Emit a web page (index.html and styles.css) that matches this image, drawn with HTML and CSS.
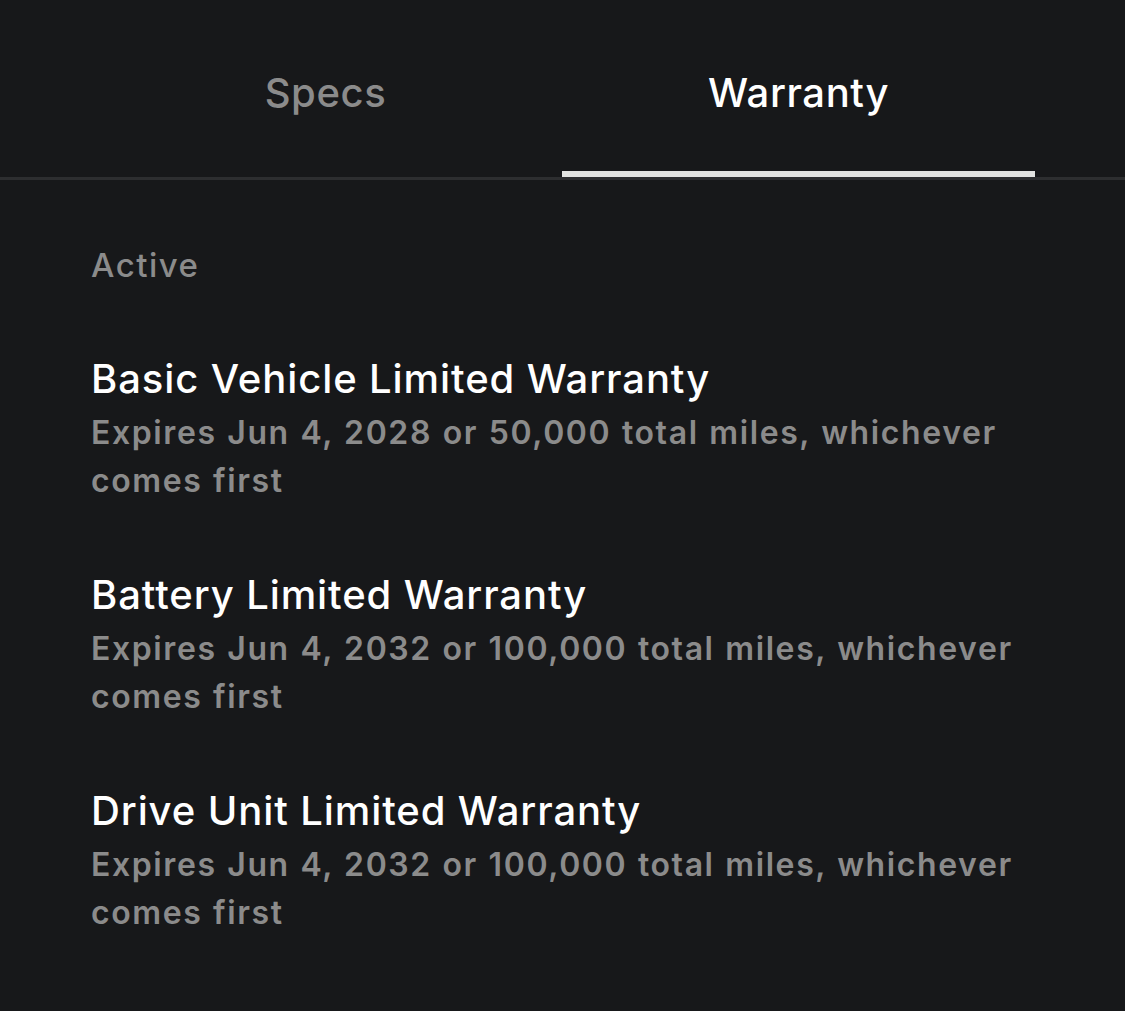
FILE: index.html
```
<!DOCTYPE html>
<html lang="en">

<head>
    <meta charset="UTF-8">
    <meta name="viewport" content="width=device-width, initial-scale=1.0">
    <title>Warranty</title>
    <link rel="stylesheet" href="styles.css">
</head>

<body>
    <div class="tabs">
        <div class="tab">Specs</div>
        <div class="tab active">Warranty</div>
    </div>
    <div class="content">
        <div class="section">Active</div>
        <div class="item">
            <div class="title">Basic Vehicle Limited Warranty</div>
            <div class="desc">Expires Jun 4, 2028 or 50,000 total miles, whichever comes first</div>
        </div>
        <div class="item">
            <div class="title">Battery Limited Warranty</div>
            <div class="desc">Expires Jun 4, 2032 or 100,000 total miles, whichever comes first</div>
        </div>
        <div class="item">
            <div class="title">Drive Unit Limited Warranty</div>
            <div class="desc">Expires Jun 4, 2032 or 100,000 total miles, whichever comes first</div>
        </div>
    </div>
</body>

</html>
```

FILE: styles.css
```
body {
    margin: 0;
    background: #17181a;
    font-family: Inter, "Noto Sans", sans-serif;
    height: 1011px;
}

.tabs {
    display: flex;
    padding: 0 90px 0 89px;
    border-bottom: 3px solid #2d2e30;
}

.tab {
    flex: 1;
    text-align: center;
    font-size: 40px;
    font-weight: 500;
    letter-spacing: 0.6px;
    color: #8b8b8b;
    height: 177px;
    line-height: 186px;
    box-sizing: border-box;
}

.tab.active {
    color: #fff;
    border-bottom: 6px solid #e2e3e1;
}

.content {
    padding: 65px 90px 0 91px;
}

.section {
    font-size: 33px;
    font-weight: 500;
    letter-spacing: 1.5px;
    line-height: 40px;
    color: #8b8b8b;
    margin-bottom: 68px;
}

.item {
    margin-bottom: 64px;
}

.title {
    font-size: 40px;
    font-weight: 500;
    letter-spacing: 0.9px;
    color: #fff;
    line-height: 52px;
}

.desc {
    font-size: 32px;
    font-weight: 600;
    letter-spacing: 1.6px;
    word-spacing: 1px;
    color: #8b8b8b;
    line-height: 48px;
    margin-top: 4px;
}
```
